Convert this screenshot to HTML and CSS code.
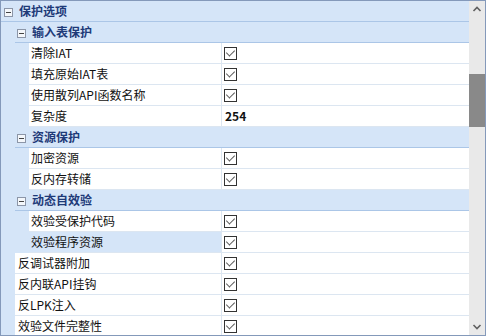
FILE: index.html
```html
<!DOCTYPE html>
<html lang="zh">
<head>
    <meta charset="UTF-8">
    <title>保护选项</title>
    <link rel="stylesheet" href="styles.css">
</head>
<body>
    <div id="grid">
        <div class="rows">

            <div class="row cat">
                <span class="box"></span>
                <span class="catname">保护选项</span>
            </div>

            <div class="row cat">
                <div class="gut g1"></div>
                <span class="box"></span>
                <span class="catname">输入表保护</span>
            </div>
            <div class="row">
                <div class="gut g2"></div>
                <div class="name">清除IAT</div>
                <div class="val"><span class="chk"></span></div>
            </div>
            <div class="row">
                <div class="gut g2"></div>
                <div class="name">填充原始IAT表</div>
                <div class="val"><span class="chk"></span></div>
            </div>
            <div class="row">
                <div class="gut g2"></div>
                <div class="name">使用散列API函数名称</div>
                <div class="val"><span class="chk"></span></div>
            </div>
            <div class="row">
                <div class="gut g2"></div>
                <div class="name">复杂度</div>
                <div class="val num">254</div>
            </div>

            <div class="row cat">
                <div class="gut g1"></div>
                <span class="box"></span>
                <span class="catname">资源保护</span>
            </div>
            <div class="row">
                <div class="gut g2"></div>
                <div class="name">加密资源</div>
                <div class="val"><span class="chk"></span></div>
            </div>
            <div class="row">
                <div class="gut g2"></div>
                <div class="name">反内存转储</div>
                <div class="val"><span class="chk"></span></div>
            </div>

            <div class="row cat">
                <div class="gut g1"></div>
                <span class="box"></span>
                <span class="catname">动态自效验</span>
            </div>
            <div class="row">
                <div class="gut g2"></div>
                <div class="name">效验受保护代码</div>
                <div class="val"><span class="chk"></span></div>
            </div>
            <div class="row">
                <div class="gut g2"></div>
                <div class="name selected">效验程序资源</div>
                <div class="val"><span class="chk"></span></div>
            </div>

            <div class="row">
                <div class="gut g1"></div>
                <div class="name">反调试器附加</div>
                <div class="val"><span class="chk"></span></div>
            </div>
            <div class="row">
                <div class="gut g1"></div>
                <div class="name">反内联API挂钩</div>
                <div class="val"><span class="chk"></span></div>
            </div>
            <div class="row">
                <div class="gut g1"></div>
                <div class="name">反LPK注入</div>
                <div class="val"><span class="chk"></span></div>
            </div>
            <div class="row">
                <div class="gut g1"></div>
                <div class="name">效验文件完整性</div>
                <div class="val"><span class="chk"></span></div>
            </div>

        </div>

        <div class="scroll">
            <svg class="arrow" width="16" height="16" viewBox="0 0 16 16"><path d="M4.5 10 L8 6.5 L11.5 10" fill="none" stroke="#606060" stroke-width="1.6"/></svg>
            <div class="track"><div class="thumb"></div></div>
            <svg class="arrow" width="16" height="16" viewBox="0 0 16 16"><path d="M4.5 6 L8 9.5 L11.5 6" fill="none" stroke="#606060" stroke-width="1.6"/></svg>
        </div>
    </div>
</body>
</html>
```

FILE: styles.css
```css
body
{
    margin: 0;
    font-family: "Noto Sans CJK SC", "DejaVu Sans", sans-serif;
    font-size: 12px;
    color: #111;
}

#grid
{
    width: 484px;
    height: 334px;
    border: 1px solid #8499ba;
    display: flex;
    overflow: hidden;
    background: #ffffff;
}

.rows
{
    width: 468px;
    height: 334px;
    overflow: hidden;
    display: flex;
    flex-direction: column;
}

.row
{
    display: flex;
    flex-shrink: 0;
    height: 21px;
    line-height: 20px;
}

.cat
{
    background: #d5e5f8;
    align-items: flex-start;
    box-shadow: inset 0 -1px 0 #abc6e7;
}

.gut
{
    background: #d5e5f8;
    flex-shrink: 0;
    height: 21px;
}

.g1
{
    width: 14px;
}

.g2
{
    width: 28px;
}

.box
{
    width: 7px;
    height: 7px;
    border: 1px solid #8c96a8;
    background: #f4f7fb;
    margin: 7px 6px 0 3px;
    position: relative;
    flex-shrink: 0;
}

.cat .g1 + .box
{
    margin-left: 2px;
}

.box::after
{
    content: "";
    position: absolute;
    left: 1px;
    top: 3px;
    width: 5px;
    height: 1px;
    background: #444;
}

.catname
{
    font-weight: bold;
    color: #1e3a78;
}

.name
{
    border-bottom: 1px solid #dce6f1;
    border-right: 1px solid #dce6f1;
    white-space: nowrap;
    overflow: hidden;
    flex-shrink: 0;
}

.g1 + .name
{
    width: 203px;
    padding-left: 3px;
}

.g2 + .name
{
    width: 190px;
    padding-left: 2px;
}

.selected
{
    background: #d5e5f8;
}

.val
{
    flex: 1;
    padding-left: 2px;
    border-bottom: 1px solid #dce6f1;
    display: flex;
    align-items: center;
}

.num
{
    font-weight: bold;
    padding-left: 3px;
}

.chk
{
    width: 11px;
    height: 11px;
    border: 1px solid #333;
    background: #fff;
    position: relative;
}

.chk::after
{
    content: "";
    position: absolute;
    left: 3px;
    top: 0px;
    width: 4px;
    height: 7px;
    border-right: 1.5px solid #5a5a5a;
    border-bottom: 1.5px solid #5a5a5a;
    transform: rotate(45deg);
}

.scroll
{
    width: 16px;
    background: #e9e9e9;
    display: flex;
    flex-direction: column;
}

.arrow
{
    display: block;
    flex-shrink: 0;
}

.track
{
    flex: 1;
}

.thumb
{
    margin-top: 57px;
    height: 53px;
    background: #898989;
}
```
